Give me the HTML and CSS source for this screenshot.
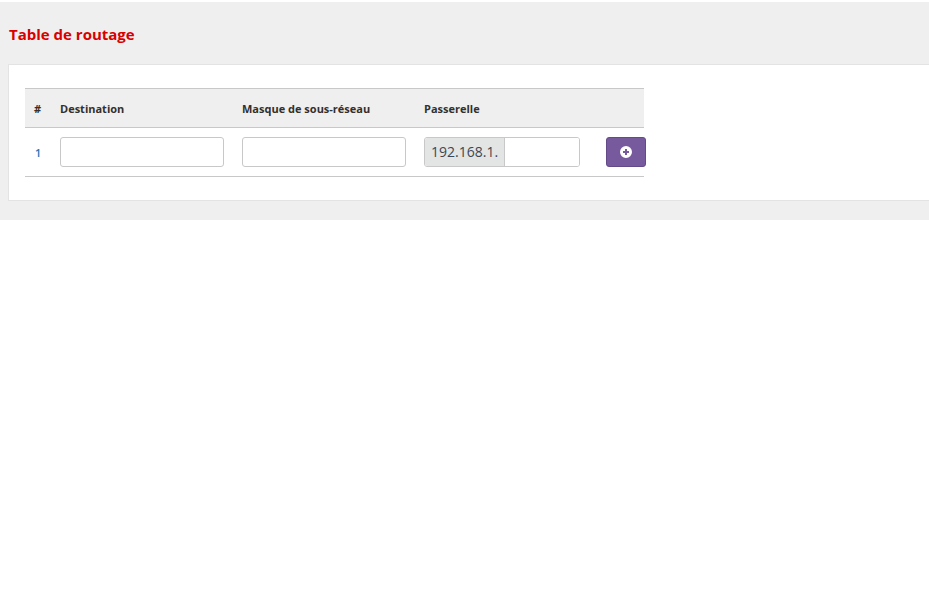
FILE: index.html
```html
<!DOCTYPE html>
<html lang="fr">
<head>
  <meta charset="UTF-8">
  <title>Table de routage</title>
  <link rel="stylesheet" href="styles.css">
</head>
<body>
  <div class="content">
    <h1 class="page-title">Table de routage</h1>
    <div class="panel">
      <table class="route-table">
        <thead>
          <tr>
            <th class="col-num">#</th>
            <th class="col-field">Destination</th>
            <th class="col-field">Masque de sous-réseau</th>
            <th class="col-field">Passerelle</th>
            <th class="col-action"></th>
          </tr>
        </thead>
        <tbody>
          <tr>
            <td class="row-num">1</td>
            <td><input class="text-input" type="text"></td>
            <td><input class="text-input" type="text"></td>
            <td>
              <div class="input-group">
                <span class="input-prefix">192.168.1.</span>
                <input class="group-input" type="text">
              </div>
            </td>
            <td>
              <button class="add-button" type="button" aria-label="Ajouter">
                <svg class="add-icon" viewBox="0 0 12 12" width="12" height="12">
                  <path fill="#fff" fill-rule="evenodd" d="M6 0a6 6 0 1 1 0 12A6 6 0 0 1 6 0zM5 3v2H3v2h2v2h2V7h2V5H7V3z"/>
                </svg>
              </button>
            </td>
          </tr>
        </tbody>
      </table>
    </div>
  </div>
</body>
</html>
```

FILE: styles.css
```css
html, body {
  margin: 0;
  padding: 0;
  background-color: #fff;
  font-family: "Open Sans", "Liberation Sans", sans-serif;
}

.content {
  margin-top: 2px;
  padding: 0 0 19px 8px;
  background-color: #efefef;
}

.page-title {
  margin: 0;
  padding: 22px 0 20px 1px;
  font-size: 15px;
  line-height: 20px;
  font-weight: 700;
  color: #d90000;
}

.panel {
  padding: 23px 0 23px 16px;
  background-color: #fff;
  border: 1px solid #e3e3e3;
  border-right: none;
}

.route-table {
  width: 619px;
  table-layout: fixed;
  border-collapse: collapse;
}

.route-table th {
  height: 38px;
  padding: 0 0 0 8px;
  text-align: left;
  font-size: 11px;
  font-weight: 700;
  color: #33302e;
  background-color: #efefef;
  border-top: 1px solid #c8c8c8;
  border-bottom: 1px solid #c8c8c8;
}

.route-table td {
  height: 48px;
  padding: 0 0 0 8px;
  border-bottom: 1px solid #c8c8c8;
}

.route-table .col-num {
  width: 18px;
  padding-left: 9px;
}

.col-field {
  width: 174px;
}

.route-table .row-num {
  padding-left: 10px;
  font-size: 11px;
  font-weight: 600;
  color: #1f78b4;
}

.text-input {
  display: block;
  box-sizing: border-box;
  width: 164px;
  height: 30px;
  padding: 0 6px;
  background-color: #fff;
  border: 1px solid #c8c8c8;
  border-radius: 3px;
}

.input-group {
  display: flex;
  box-sizing: border-box;
  width: 156px;
  height: 30px;
  border: 1px solid #c8c8c8;
  border-radius: 3px;
  overflow: hidden;
}

.input-prefix {
  padding: 0 6px;
  font-size: 14px;
  line-height: 28px;
  color: #3f4652;
  background-color: #e3e4e4;
  border-right: 1px solid #c8c8c8;
}

.group-input {
  flex: 1;
  min-width: 0;
  padding: 0 6px;
  border: none;
  outline: none;
}

.add-button {
  display: flex;
  align-items: center;
  justify-content: center;
  box-sizing: border-box;
  width: 40px;
  height: 30px;
  margin-left: 0;
  padding: 0;
  background-color: #775a9d;
  border: 1px solid #654a8a;
  border-radius: 3px;
}
```
